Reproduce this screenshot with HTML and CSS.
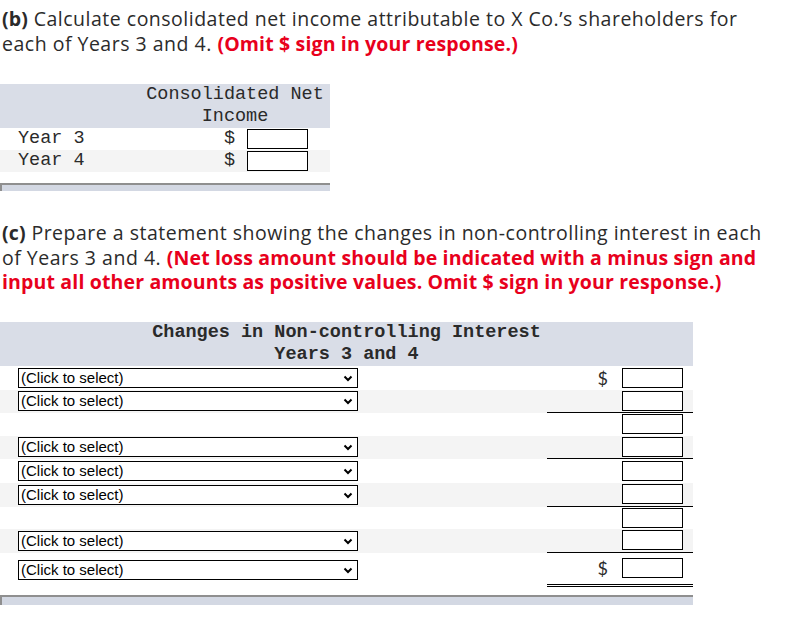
FILE: index.html
```html
<!DOCTYPE html>
<html lang="en">
<head>
<meta charset="utf-8">
<title>Consolidated net income</title>
<link rel="stylesheet" href="styles.css">
</head>
<body>
<main class="page">
  <p class="prompt prompt-b"><b>(b)</b> Calculate consolidated net income attributable to X Co.’s shareholders for<br>each of Years 3 and 4. <span class="note">(Omit $ sign in your response.)</span></p>

  <section class="sheet sheet-b">
    <div class="sheet-head head-b">
      <div></div>
      <div class="col-title">Consolidated Net<br>Income</div>
    </div>
    <div class="row-b">
      <div class="lbl">Year 3</div>
      <div class="amt-b"><span class="cur">$</span><input class="box" type="text"></div>
    </div>
    <div class="row-b alt">
      <div class="lbl">Year 4</div>
      <div class="amt-b"><span class="cur">$</span><input class="box" type="text"></div>
    </div>
    <div class="sheet-foot"></div>
  </section>

  <p class="prompt prompt-c"><b>(c)</b> Prepare a statement showing the changes in non-controlling interest in each<br>of Years 3 and 4. <span class="note">(Net loss amount should be indicated with a minus sign and<br>input all other amounts as positive values. Omit $ sign in your response.)</span></p>

  <section class="sheet sheet-c">
    <div class="sheet-head head-c">Changes in Non-controlling Interest<br>Years 3 and 4</div>

    <div class="row-c h24">
      <div class="pick-cell"><span class="pick"><select><option>(Click to select)</option></select><svg class="chev" width="10" height="7" viewBox="0 0 10 7"><polyline points="1.5,1.5 5,5 8.5,1.5" fill="none" stroke="#000" stroke-width="2"/></svg></span></div>
      <div class="amt-c"><span class="cur">$</span><input class="box" type="text"></div>
    </div>
    <div class="row-c h23 alt">
      <div class="pick-cell"><span class="pick"><select><option>(Click to select)</option></select><svg class="chev" width="10" height="7" viewBox="0 0 10 7"><polyline points="1.5,1.5 5,5 8.5,1.5" fill="none" stroke="#000" stroke-width="2"/></svg></span></div>
      <div class="amt-c rule"><input class="box" type="text"></div>
    </div>
    <div class="row-c h23">
      <div class="pick-cell"></div>
      <div class="amt-c"><input class="box" type="text"></div>
    </div>
    <div class="row-c h23 alt">
      <div class="pick-cell"><span class="pick"><select><option>(Click to select)</option></select><svg class="chev" width="10" height="7" viewBox="0 0 10 7"><polyline points="1.5,1.5 5,5 8.5,1.5" fill="none" stroke="#000" stroke-width="2"/></svg></span></div>
      <div class="amt-c rule"><input class="box" type="text"></div>
    </div>
    <div class="row-c h24">
      <div class="pick-cell"><span class="pick"><select><option>(Click to select)</option></select><svg class="chev" width="10" height="7" viewBox="0 0 10 7"><polyline points="1.5,1.5 5,5 8.5,1.5" fill="none" stroke="#000" stroke-width="2"/></svg></span></div>
      <div class="amt-c"><input class="box" type="text"></div>
    </div>
    <div class="row-c h24 alt">
      <div class="pick-cell"><span class="pick"><select><option>(Click to select)</option></select><svg class="chev" width="10" height="7" viewBox="0 0 10 7"><polyline points="1.5,1.5 5,5 8.5,1.5" fill="none" stroke="#000" stroke-width="2"/></svg></span></div>
      <div class="amt-c rule"><input class="box" type="text"></div>
    </div>
    <div class="row-c h22">
      <div class="pick-cell"></div>
      <div class="amt-c"><input class="box" type="text"></div>
    </div>
    <div class="row-c h24 alt">
      <div class="pick-cell"><span class="pick"><select><option>(Click to select)</option></select><svg class="chev" width="10" height="7" viewBox="0 0 10 7"><polyline points="1.5,1.5 5,5 8.5,1.5" fill="none" stroke="#000" stroke-width="2"/></svg></span></div>
      <div class="amt-c rule"><input class="box" type="text"></div>
    </div>
    <div class="row-c h34">
      <div class="pick-cell"><span class="pick"><select><option>(Click to select)</option></select><svg class="chev" width="10" height="7" viewBox="0 0 10 7"><polyline points="1.5,1.5 5,5 8.5,1.5" fill="none" stroke="#000" stroke-width="2"/></svg></span></div>
      <div class="amt-c total"><span class="cur">$</span><input class="box" type="text"></div>
    </div>
    <div class="sheet-foot"></div>
  </section>
</main>
</body>
</html>
```

FILE: styles.css
```css
* { box-sizing: border-box; }

html, body {
  margin: 0;
  padding: 0;
  background: #fff;
}

.page {
  padding: 0 0 0 2px;
}

.prompt {
  margin: 0;
  font-family: "Open Sans", Lato, sans-serif;
  font-size: 19.5px;
  line-height: 24.5px;
  letter-spacing: 0.5px;
  color: #2b2b2b;
}

.prompt b { font-weight: 700; letter-spacing: 0.2px; }

.note {
  color: #e8001c;
  font-weight: 700;
  letter-spacing: 0.15px;
}

.prompt-b { padding-top: 7px; }
.prompt-c { margin-top: 30px; }

.sheet {
  font-family: "Liberation Mono", "Courier New", monospace;
  font-size: 18.5px;
  color: #2a2a2a;
  margin-left: -2px;
}

.sheet-b { width: 330px; margin-top: 28px; }
.sheet-c { width: 693px; margin-top: 27px; }

.sheet-head {
  background: #d9dde7;
  height: 44px;
  line-height: 22px;
}

.head-b {
  display: grid;
  grid-template-columns: 140px 1fr;
}

.col-title { text-align: center; }

.head-c {
  text-align: center;
  font-weight: 700;
}

.row-b {
  display: grid;
  grid-template-columns: 140px 1fr;
  align-items: center;
  height: 22px;
}

.alt { background: #f4f4f4; }

.lbl { padding-left: 18px; line-height: 22px; }

.amt-b {
  display: flex;
  align-items: center;
  justify-content: flex-end;
  padding-right: 22px;
}

.cur {
  margin-right: 12px;
  line-height: 20px;
}

.box {
  display: block;
  width: 61px;
  height: 20px;
  border: 1px solid #000;
  border-radius: 0;
  background: #fff;
  padding: 0;
  margin: 0;
  outline: none;
}

.sheet-foot {
  height: 10px;
  background: #d3d8e3;
  border-top: 2px solid #8f8f8f;
  border-left: 2px solid #8f8f8f;
}

.sheet-b .sheet-foot { margin-top: 11px; height: 8px; }
.sheet-c .sheet-foot { margin-top: 8px; }

.row-c {
  display: grid;
  grid-template-columns: 1fr 146px;
}

.h22 { height: 22px; }
.h23 { height: 23px; }
.h24 { height: 24px; }
.h34 { height: 34px; }

.pick-cell {
  display: flex;
  align-items: center;
  padding-left: 18px;
}

.pick {
  position: relative;
  display: block;
  width: 340px;
  height: 20px;
}

.pick select {
  appearance: none;
  -webkit-appearance: none;
  display: block;
  width: 340px;
  height: 20px;
  margin: 0;
  padding: 0 0 0 2px;
  border: 1px solid #000;
  border-radius: 0;
  background: #fff;
  font-family: "Liberation Sans", Arial, sans-serif;
  font-size: 15px;
  line-height: 18px;
  color: #000;
}

.chev {
  position: absolute;
  right: 5px;
  top: 7px;
  pointer-events: none;
}

.amt-c {
  display: flex;
  align-items: center;
  justify-content: flex-end;
  padding-right: 10px;
}

.amt-c .cur {
  font-family: Lato, "Liberation Sans", sans-serif;
  font-size: 18px;
  margin-right: 14px;
}

.rule { border-bottom: 1px solid #000; }

.total { border-bottom: 3px double #000; }
```
